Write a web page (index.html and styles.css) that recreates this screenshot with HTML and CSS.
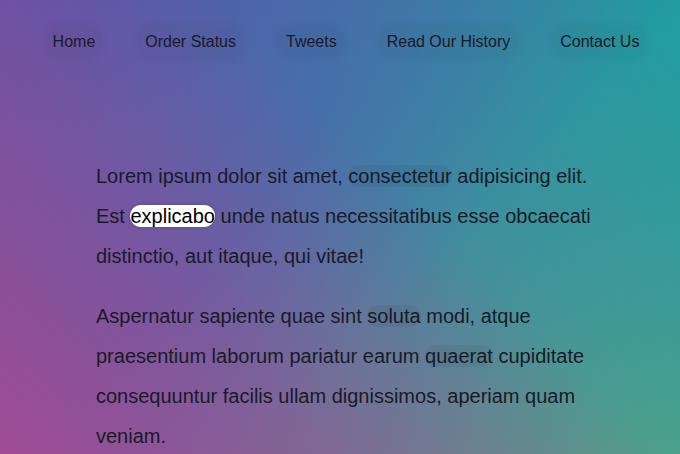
FILE: index.html
```html
<!DOCTYPE html>
<html lang="en">
<head>
<meta charset="utf-8">
<title>Follow Along Links</title>
<link rel="stylesheet" href="styles.css">
</head>
<body>
<nav>
  <ul class="menu">
    <li><a class="menu-link" href="#">Home</a></li>
    <li><a class="menu-link" href="#">Order Status</a></li>
    <li><a class="menu-link" href="#">Tweets</a></li>
    <li><a class="menu-link" href="#">Read Our History</a></li>
    <li><a class="menu-link" href="#">Contact Us</a></li>
  </ul>
</nav>
<div class="wrapper">
  <p>Lorem ipsum dolor sit amet, <a class="link" href="#">consectetur</a> adipisicing elit. Est <a class="link is-active" href="#">explicabo</a> unde natus necessitatibus esse obcaecati distinctio, aut itaque, qui vitae!</p>
  <p>Aspernatur sapiente quae sint <a class="link" href="#">soluta</a> modi, atque praesentium laborum pariatur earum <a class="link" href="#">quaerat</a> cupiditate consequuntur facilis ullam dignissimos, aperiam quam veniam.</p>
</div>
</body>
</html>
```
FILE: styles.css
```css
html {
  box-sizing: border-box;
  min-height: 100%;
  background:
    linear-gradient(45deg, rgba(162, 74, 146, 1) 0%, rgba(162, 74, 146, 0) 60%),
    linear-gradient(135deg, rgba(88, 84, 170, 1) 0%, rgba(88, 84, 170, 0) 60%),
    linear-gradient(225deg, rgba(32, 158, 160, 1) 0%, rgba(32, 158, 160, 0) 70%),
    linear-gradient(315deg, rgba(112, 166, 120, 1) 0%, rgba(112, 166, 120, 0) 60%),
    #4f6cb0;
}

*, *::before, *::after { box-sizing: inherit; }

body {
  margin: 0;
  padding-left: 12px;
  min-height: 100vh;
  font-family: "Liberation Sans", Arial, sans-serif;
  color: #1a1a28;
}

.menu {
  display: flex;
  justify-content: center;
  list-style: none;
  padding: 0;
  margin: 28px 0 100px;
  font-size: 16px;
}

.menu-link {
  display: inline-block;
  padding: 5px;
  margin: 0 20px;
  color: #1a1a28;
  text-decoration: none;
  background: rgba(0, 0, 0, 0.03);
  border-radius: 10px;
  box-shadow: 0 0 8px 2px rgba(0, 0, 0, 0.06);
}

.wrapper {
  max-width: 500px;
  margin: 0 auto;
  font-size: 20px;
  line-height: 2;
}

.wrapper p {
  margin: 20px 0;
}

.link {
  color: #1a1a28;
  text-decoration: none;
  background: rgba(0, 0, 0, 0.05);
  border-radius: 20px;
}

.link.is-active {
  background: #fff;
  color: #000;
  box-shadow: 0 0 4px rgba(0, 0, 0, 0.2);
}
```
